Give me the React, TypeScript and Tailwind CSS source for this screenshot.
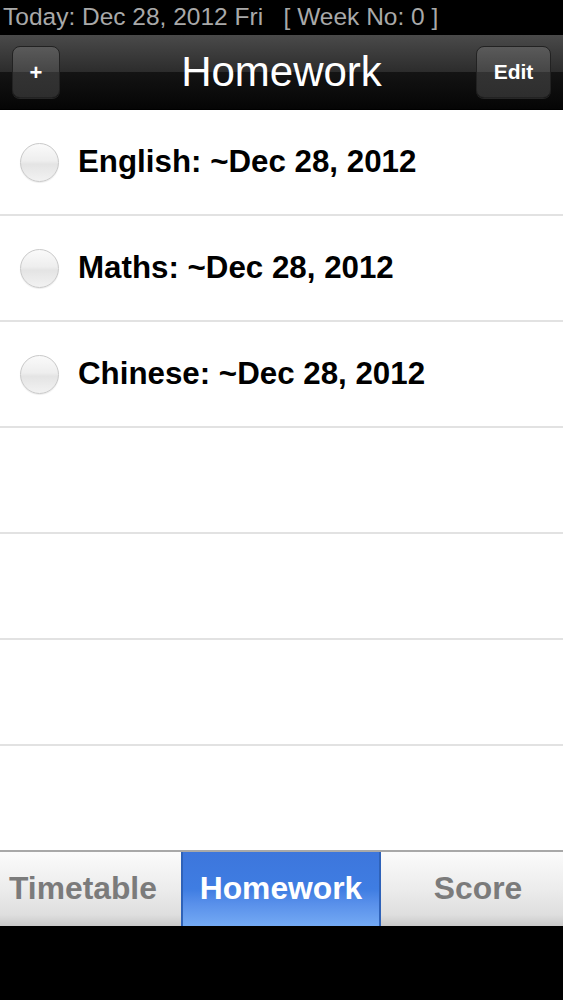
import React from 'react';

const items = ['English: ~Dec 28, 2012', 'Maths: ~Dec 28, 2012', 'Chinese: ~Dec 28, 2012'];
const rows = [...items, '', '', '', ''];

function Radio() {
  return (
    <div className="w-[39px] h-[39px] rounded-full border border-[#c9c9c9] bg-[linear-gradient(to_bottom,#fafafa_0%,#eeeeee_45%,#e4e4e4_55%,#f2f2f2_100%)] shadow-[0_1px_1px_rgba(0,0,0,0.08)] shrink-0" />
  );
}

export default function App() {
  return (
    <div className="w-[563px] h-[1000px] bg-black flex flex-col overflow-hidden font-['Liberation_Sans',Arial,sans-serif]">
      {/* Status line */}
      <div className="h-[35px] flex items-center pl-[3px] text-[24.5px] text-[#a9a9a9] leading-none whitespace-pre">
        Today: Dec 28, 2012 Fri   [ Week No: 0 ]
      </div>

      {/* Nav bar */}
      <div className="h-[75px] relative flex items-center justify-between px-[12px] border-b border-black bg-[linear-gradient(to_bottom,#4a4a4a_0%,#2c2c2c_50%,#141414_50%,#050505_100%)]">
        <button className="w-[48px] h-[52px] rounded-[8px] border border-[#222] bg-[linear-gradient(to_bottom,#5a5a5a_0%,#464646_50%,#333_50%,#2e2e2e_100%)] text-white text-[22px] font-bold flex items-center justify-center shadow-[0_1px_0_rgba(255,255,255,0.12)]">
          +
        </button>
        <h1 className="absolute left-0 right-0 text-center text-white text-[42px] leading-none pointer-events-none">Homework</h1>
        <button className="w-[75px] h-[52px] rounded-[8px] border border-[#222] bg-[linear-gradient(to_bottom,#5a5a5a_0%,#464646_50%,#333_50%,#2e2e2e_100%)] text-white text-[21px] font-bold flex items-center justify-center shadow-[0_1px_0_rgba(255,255,255,0.12)]">
          Edit
        </button>
      </div>

      {/* List */}
      <div className="flex-1 flex flex-col bg-white">
        {rows.map((label, i) => (
          <div
            key={i}
            className={`flex-1 flex items-center gap-[19px] pl-[20px] ${i < rows.length - 1 ? 'border-b-2 border-[#e2e2e2]' : ''}`}
          >
            {label && (
              <>
                <Radio />
                <span className="text-[31.3px] font-bold text-black leading-none">{label}</span>
              </>
            )}
          </div>
        ))}
      </div>

      {/* Segmented tabs */}
      <div className="h-[76px] flex border-t-2 border-[#a8a8a8] bg-[linear-gradient(to_bottom,#fbfbfb_0%,#ececec_50%,#dedede_85%,#c8c8c8_100%)]">
        <div className="w-[181px] flex items-center pl-[9px] text-[31.8px] font-bold text-[#7b7b7b] leading-none">Timetable</div>
        <div className="w-[200px] flex items-center justify-center text-[31.8px] font-bold text-white leading-none border-x-2 border-[#2f62b8] bg-[linear-gradient(to_bottom,#3d76dc_0%,#3f7de2_50%,#5990ea_70%,#74aaf4_100%)]">
          Homework
        </div>
        <div className="flex-1 flex items-center justify-center pl-[12px] text-[31.8px] font-bold text-[#7b7b7b] leading-none">Score</div>
      </div>

      <div className="h-[74px] bg-black" />
    </div>
  );
}
